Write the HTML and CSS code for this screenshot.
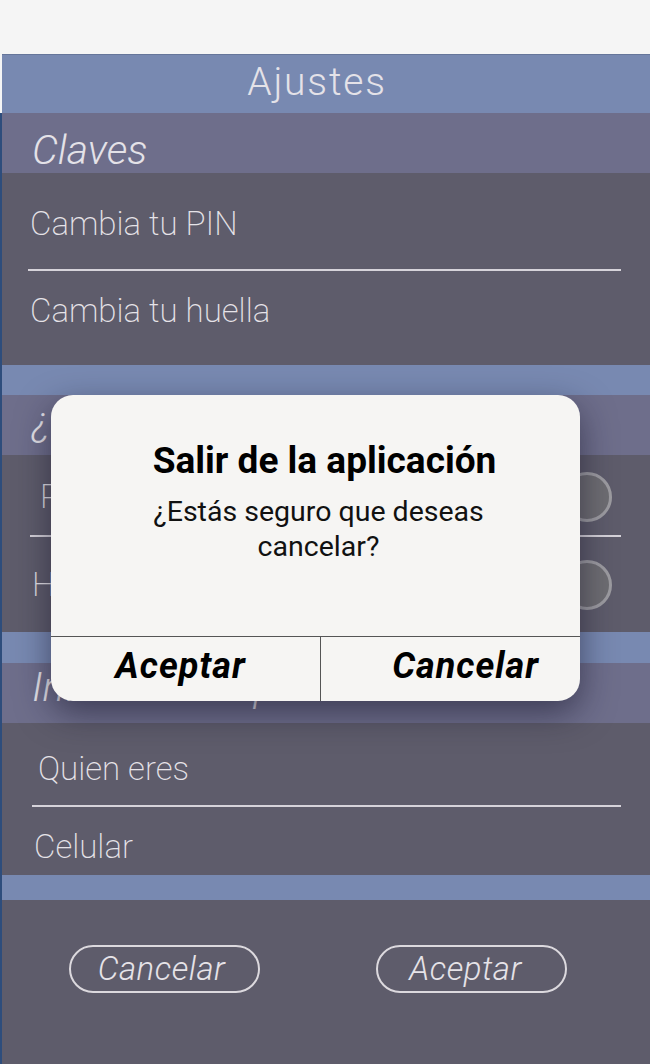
FILE: index.html
```html
<!DOCTYPE html>
<html lang="es">
<head>
<meta charset="utf-8">
<title>Ajustes</title>
<link rel="stylesheet" href="styles.css">
</head>
<body>
<div class="top-gap"></div>
<header class="title">Ajustes</header>
<main class="app">
  <section class="group">
    <h2 class="sec-head">Claves</h2>
    <div class="items">
      <div class="item item-a">Cambia tu PIN</div>
      <div class="divider"></div>
      <div class="item item-b">Cambia tu huella</div>
    </div>
  </section>
  <div class="band"></div>
  <section class="group">
    <h2 class="sec-head sec-head-2">¿Cómo ingresar?</h2>
    <div class="items items-2">
      <div class="item row row-a"><span class="r1">PIN</span><span class="toggle"><span class="thumb"></span></span></div>
      <div class="divider divider-2"></div>
      <div class="item row row-b"><span class="r2">Huella</span><span class="toggle"><span class="thumb"></span></span></div>
    </div>
  </section>
  <div class="band band-2"></div>
  <section class="group">
    <h2 class="sec-head sec-head-3">Información personal</h2>
    <div class="items items-3">
      <div class="item q-a">Quien eres</div>
      <div class="divider divider-3"></div>
      <div class="item q-b">Celular</div>
    </div>
  </section>
  <div class="band band-3"></div>
  <div class="actions">
    <button class="pill pill-left">Cancelar</button>
    <button class="pill pill-right">Aceptar</button>
  </div>
</main>

<div class="dialog">
  <div class="dialog-body">
    <h3 class="dialog-title">Salir de la aplicación</h3>
    <p class="dialog-text">¿Estás seguro que deseas<br>cancelar?</p>
  </div>
  <div class="dialog-buttons">
    <button class="dbtn dbtn-left">Aceptar</button>
    <button class="dbtn dbtn-right">Cancelar</button>
  </div>
</div>
</body>
</html>
```

FILE: styles.css
```css
html, body {
  margin: 0;
  padding: 0;
}
body {
  background: #f5f5f5;
  font-family: Roboto, "Liberation Sans", sans-serif;
  width: 650px;
  height: 1064px;
  overflow: hidden;
  position: relative;
}
.top-gap {
  height: 54px;
}
.title {
  margin-left: 2px;
  height: 58px;
  border-top: 1px solid #66769a;
  background: #7889b1;
  color: #e4e2e8;
  font-weight: 300;
  font-size: 39px;
  letter-spacing: 1.8px;
  line-height: 54px;
  text-align: center;
  padding-right: 18px;
}
.app {
  border-left: 2px solid #2e4d7c;
  background: #5e5c6b;
  height: 951px;
}
.sec-head {
  margin: 0;
  height: 60px;
  background: #6e6e8b;
  color: #e4e2e8;
  font-weight: 300;
  font-style: italic;
  font-size: 41px;
  line-height: 74px;
  padding-left: 30px;
  box-sizing: border-box;
  white-space: nowrap;
}
.sec-head-2 { line-height: 52px; }
.sec-head-3 { line-height: 48px; }
.items {
  background: #5e5c6b;
  padding: 0 29px 0 26px;
  height: 192px;
  box-sizing: border-box;
}
.item {
  color: #e6e3e8;
  font-weight: 200;
  font-size: 33px;
  line-height: 40px;
  padding-left: 2px;
}
.item-a { padding-top: 31px; height: 96px; box-sizing: border-box; }
.item-b { padding-top: 20px; height: 94px; box-sizing: border-box; }
.divider {
  height: 2px;
  background: #d6d3da;
}
.band {
  height: 30px;
  background: #7889b1;
}
.items-2 {
  height: 177px;
  padding-left: 28px;
}
.row {
  display: flex;
  justify-content: space-between;
  align-items: center;
  box-sizing: border-box;
}
.row-a { height: 80px; padding-top: 4px; }
.row-b { height: 95px; }
.r1 { padding-left: 8px; }
.r2 { padding-left: 0; }
.toggle {
  width: 50px;
  height: 50px;
  margin-right: 9px;
  display: flex;
}
.thumb {
  width: 100%;
  height: 100%;
  border-radius: 50%;
  background: #6e6d72;
  border: 3px solid #9d9ca1;
  box-sizing: border-box;
}
.band-2 { height: 31px; }
.items-3 {
  height: 152px;
  padding-left: 30px;
}
.q-a { height: 82px; padding-top: 26px; box-sizing: border-box; padding-left: 6px; }
.q-b { height: 68px; padding-top: 20px; box-sizing: border-box; padding-left: 2px; }
.band-3 { height: 25px; }
.actions {
  display: flex;
  gap: 116px;
  padding: 45px 0 0 67px;
}
.pill {
  width: 191px;
  height: 48px;
  border: 2px solid #dcd9de;
  border-radius: 24px;
  background: transparent;
  color: #e6e3e8;
  font-family: Roboto, "Liberation Sans", sans-serif;
  font-weight: 300;
  font-style: italic;
  font-size: 33px;
  letter-spacing: 0.5px;
  line-height: 44px;
  padding: 0;
}
.pill-left { padding-right: 6px; }
.pill-right { padding-right: 12px; }

/* dialog overlay */
.dialog {
  position: absolute;
  left: 51px;
  top: 395px;
  width: 529px;
  height: 306px;
  background: #f6f5f3;
  border-radius: 22px;
  box-shadow: 0 12px 34px rgba(20, 18, 40, 0.55);
  display: flex;
  flex-direction: column;
  overflow: hidden;
}
.dialog-body {
  flex: 1;
  text-align: center;
  padding-top: 44px;
}
.dialog-title {
  margin: 0;
  font-weight: 700;
  font-size: 37px;
  line-height: 44px;
  color: #000;
  padding-left: 18px;
}
.dialog-text {
  margin: 11px 0 0;
  font-size: 28.5px;
  line-height: 35px;
  color: #111;
  padding-left: 6px;
}
.dialog-buttons {
  height: 64px;
  border-top: 1px solid #555;
  display: flex;
}
.dbtn {
  flex: none;
  background: transparent;
  border: 0;
  padding: 0 0 6px;
  font-family: Roboto, "Liberation Sans", sans-serif;
  font-weight: 700;
  font-style: italic;
  font-size: 36px;
  letter-spacing: 1px;
  color: #000;
}
.dbtn-left {
  width: 270px;
  border-right: 1px solid #555;
  text-align: center;
  padding-right: 10px;
}
.dbtn-right {
  width: 258px;
  text-align: right;
  padding-right: 40px;
}
```
